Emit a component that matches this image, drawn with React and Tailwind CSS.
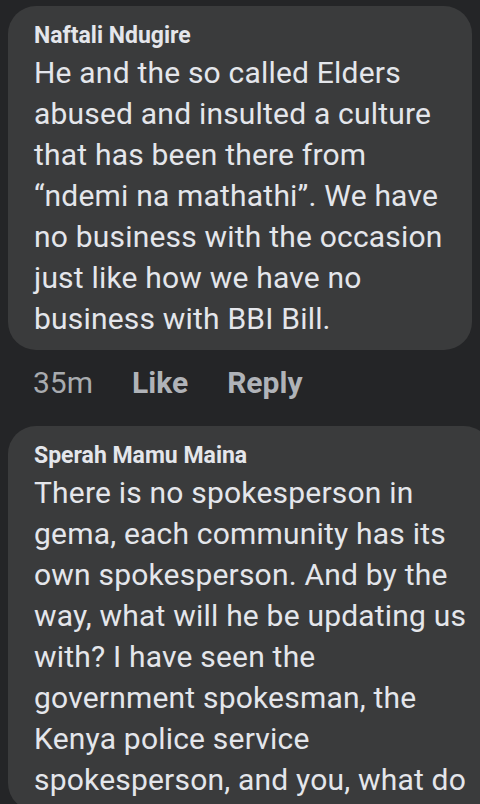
import React from "react";

const comments = [
  {
    name: "Naftali Ndugire",
    lines: [
      "He and the so called Elders",
      "abused and insulted a culture",
      "that has been there from",
      "\u201Cndemi na mathathi\u201D. We have",
      "no business with the occasion",
      "just like how we have no",
      "business with BBI Bill.",
    ],
    time: "35m",
  },
  {
    name: "Sperah Mamu Maina",
    lines: [
      "There is no spokesperson in",
      "gema, each community has its",
      "own spokesperson. And by the",
      "way, what will he be updating us",
      "with? I have seen the",
      "government spokesman, the",
      "Kenya police service",
      "spokesperson, and you, what do",
    ],
  },
];

const Bubble = ({ name, lines, wide }) => (
  <div
    className={`bg-[#3a3b3c] rounded-[28px] pl-[26px] pt-[16px] pb-[11px] ${
      wide ? "ml-2 mr-[-12px]" : "mx-2"
    }`}
  >
    <p className="text-[23px] leading-[28px] font-bold text-[#e4e6eb]">{name}</p>
    <div className="mt-[2px] text-[30px] leading-[41px] tracking-[0.2px] text-[#e4e6eb]">
      {lines.map((l, i) => (
        <p key={i} className="whitespace-nowrap">
          {l}
        </p>
      ))}
    </div>
  </div>
);

export default function App() {
  return (
    <div
      className="w-[480px] h-[804px] overflow-hidden bg-[#242527] pt-[6px]"
      style={{ fontFamily: "Roboto, 'Noto Sans', sans-serif" }}
    >
      <Bubble name={comments[0].name} lines={comments[0].lines} />

      {/* meta row */}
      <div className="flex items-center pl-[33px] mt-[15px] h-[36px] text-[30px] leading-[36px]">
        <span className="text-[#a8abaf]">{comments[0].time}</span>
        <span className="ml-[39px] font-bold text-[#b0b3b8]">Like</span>
        <span className="ml-[39px] font-bold text-[#b0b3b8]">Reply</span>
      </div>

      <div className="mt-[25px]">
        <Bubble name={comments[1].name} lines={comments[1].lines} wide />
      </div>
    </div>
  );
}
